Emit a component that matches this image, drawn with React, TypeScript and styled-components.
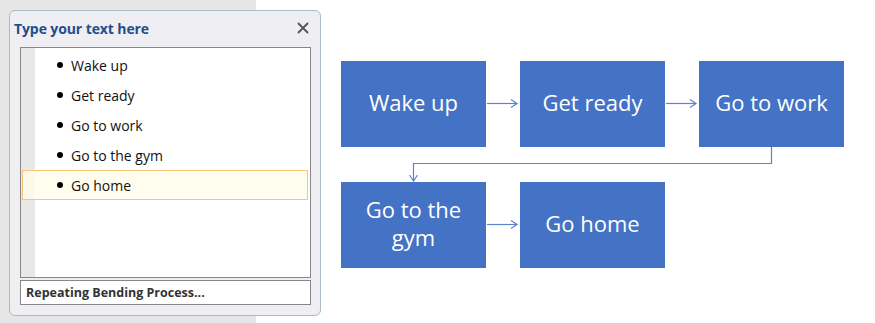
import React from 'react';
import styled, { createGlobalStyle } from 'styled-components';

const GlobalStyle = createGlobalStyle`
  html, body {
    margin: 0;
    padding: 0;
    background: #fff;
  }
  body {
    font-family: "Open Sans", "Noto Sans", sans-serif;
  }
`;

const Page = styled.div`
  position: relative;
  display: flex;
  width: 875px;
  height: 323px;
  overflow: hidden;
`;

const Sidebar = styled.div`
  width: 256px;
  flex: none;
  background: #e6e6e6;
`;

const Canvas = styled.div`
  flex: 1;
  background: #fff;
  padding: 61px 0 0 85px;
`;

// the floating text pane sits over the sidebar and the slide
const Pane = styled.div`
  position: absolute;
  left: 9px;
  top: 10px;
  width: 312px;
  height: 306px;
  box-sizing: border-box;
  background: #eeeef3;
  border: 1px solid #a8bcc6;
  border-radius: 6px;
  display: flex;
  flex-direction: column;
  padding: 0 9px 10px 10px;
`;

const PaneHeader = styled.div`
  height: 36px;
  box-sizing: border-box;
  padding: 0 1px 2px 0;
  display: flex;
  align-items: center;
  justify-content: space-between;
  margin-left: -6px;
`;

const PaneTitle = styled.div`
  font-family: "Open Sans", sans-serif;
  font-weight: 700;
  font-size: 14px;
  color: #1f4e8c;
  letter-spacing: -0.1px;
`;

const CloseButton = styled.button`
  border: none;
  background: none;
  padding: 0;
  width: 14px;
  height: 14px;
  display: flex;
  cursor: pointer;
`;

const TextBox = styled.div`
  flex: 1;
  background: #fff;
  border: 1px solid #878787;
  display: flex;
  position: relative;
`;

const Gutter = styled.div`
  width: 14px;
  background: #e8e8e8;
`;

const List = styled.ul`
  list-style: none;
  margin: 0;
  padding: 2px 0 0 0;
  position: absolute;
  left: 1px;
  right: 2px;
  top: 0;
`;

const Item = styled.li<{ $selected?: boolean }>`
  height: 30px;
  box-sizing: border-box;
  display: flex;
  align-items: center;
  padding-left: 34px;
  font-family: "Open Sans", sans-serif;
  font-size: 14px;
  color: #111;
  border: 1px solid ${({ $selected }) => ($selected ? '#f6c47c' : 'transparent')};
  background: ${({ $selected }) => ($selected ? 'rgba(255, 252, 232, 0.8)' : 'transparent')};
`;

const Bullet = styled.span`
  width: 6px;
  height: 6px;
  border-radius: 50%;
  background: #000;
  margin-right: 8px;
  flex: none;
`;

const StatusBox = styled.div`
  margin-top: 2px;
  height: 25px;
  box-sizing: border-box;
  background: #fff;
  border: 1px solid #878787;
  display: flex;
  align-items: center;
  padding-left: 5px;
  font-family: "Open Sans", sans-serif;
  font-weight: 700;
  font-size: 12.5px;
  color: #333;
`;

const Diagram = styled.div`
  display: grid;
  grid-template-columns: 145px 34px 145px 34px 145px;
  grid-template-rows: 86px 35px 86px;
`;

const Shape = styled.div`
  background: #4472c4;
  color: #fff;
  display: flex;
  align-items: center;
  justify-content: center;
  text-align: center;
  font-family: "Open Sans", sans-serif;
  font-size: 22px;
  line-height: 28px;
  padding: 0 10px 4px;
`;

const ArrowCell = styled.div`
  display: flex;
  align-items: center;
`;

const BendRow = styled.div`
  grid-column: 1 / 6;
`;

const items = ['Wake up', 'Get ready', 'Go to work', 'Go to the gym', 'Go home'];

function Arrow() {
  return (
    <ArrowCell>
      <svg width="34" height="12" viewBox="0 0 34 12">
        <path d="M1 5.5 H31" stroke="#5b84cc" strokeWidth="1.2" fill="none" />
        <path d="M25 1.5 L31 5.5 L25 9.5" stroke="#5b84cc" strokeWidth="1.2" fill="none" />
      </svg>
    </ArrowCell>
  );
}

export default function App() {
  return (
    <>
      <GlobalStyle />
      <Page>
        <Sidebar />
        <Canvas>
          <Diagram>
            <Shape>Wake up</Shape>
            <Arrow />
            <Shape>Get ready</Shape>
            <Arrow />
            <Shape>Go to work</Shape>
            <BendRow>
              <svg width="503" height="35" viewBox="0 0 503 35">
                <path d="M430.5 0 V16.5 H72.5 V34" stroke="#5b84cc" strokeWidth="1.2" fill="none" />
                <path d="M68.5 28 L72.5 34 L76.5 28" stroke="#5b84cc" strokeWidth="1.2" fill="none" />
              </svg>
            </BendRow>
            <Shape>Go to the gym</Shape>
            <Arrow />
            <Shape>Go home</Shape>
          </Diagram>
        </Canvas>
        <Pane>
          <PaneHeader>
            <PaneTitle>Type your text here</PaneTitle>
            <CloseButton aria-label="Close">
              <svg width="14" height="14" viewBox="0 0 14 14">
                <path d="M2 2 L12 12 M12 2 L2 12" stroke="#555" strokeWidth="1.8" />
              </svg>
            </CloseButton>
          </PaneHeader>
          <TextBox>
            <Gutter />
            <List>
              {items.map((item, i) => (
                <Item key={item} $selected={i === items.length - 1}>
                  <Bullet />
                  {item}
                </Item>
              ))}
            </List>
          </TextBox>
          <StatusBox>Repeating Bending Process...</StatusBox>
        </Pane>
      </Page>
    </>
  );
}
